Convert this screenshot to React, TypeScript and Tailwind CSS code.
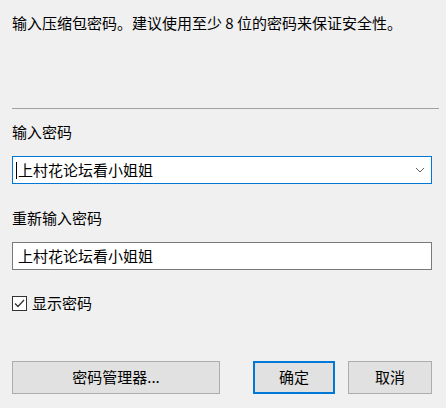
export default function App() {
  return (
    <div className="w-[446px] h-[408px] bg-[#f0f0f0] text-[15px] text-black font-['Microsoft_YaHei','Noto_Sans_CJK_SC',sans-serif] flex flex-col">
      <p className="pl-3 pt-[13px] leading-5">
        输入压缩包密码。建议使用至少 8 位的密码来保证安全性。
      </p>
      <div className="mt-[75px] ml-3 mr-[7px] h-px bg-[#a0a0a0]" />

      <label className="mt-[13px] pl-3 leading-5">输入密码</label>
      <div className="mt-[14px] ml-3 w-[420px] h-[28px] border border-[#0078d7] bg-white flex items-center">
        <span className="ml-[3px] w-px h-[17px] bg-black" />
        <span className="ml-px leading-5 flex-1">上村花论坛看小姐姐</span>
        <svg width="10" height="6" viewBox="0 0 10 6" className="mr-[6px]">
          <path d="M1 1 L5 5 L9 1" fill="none" stroke="#606060" strokeWidth="1" />
        </svg>
      </div>

      <label className="mt-6 pl-3 leading-5">重新输入密码</label>
      <div className="mt-[14px] ml-3 w-[420px] h-[28px] border border-[#7a7a7a] bg-white flex items-center">
        <span className="ml-[5px] leading-5">上村花论坛看小姐姐</span>
      </div>

      <div className="mt-[23px] pl-3 flex items-center gap-[5px] leading-5">
        <span className="w-[15px] h-[15px] border border-[#333333] bg-white flex items-center justify-center">
          <svg width="11" height="9" viewBox="0 0 11 9">
            <path d="M1 4.5 L4 7.5 L10 1" fill="none" stroke="#333333" strokeWidth="1.3" />
          </svg>
        </span>
        <span>显示密码</span>
      </div>

      <div className="mt-[48px] pl-3 flex">
        <button className="w-[208px] h-[33px] bg-[#e1e1e1] border border-[#adadad]">
          密码管理器...
        </button>
        <button className="ml-[33px] w-[82px] h-[33px] bg-[#e1e1e1] border-2 border-[#0078d7]">
          确定
        </button>
        <button className="ml-[13px] w-[84px] h-[33px] bg-[#e1e1e1] border border-[#adadad]">
          取消
        </button>
      </div>
    </div>
  );
}
